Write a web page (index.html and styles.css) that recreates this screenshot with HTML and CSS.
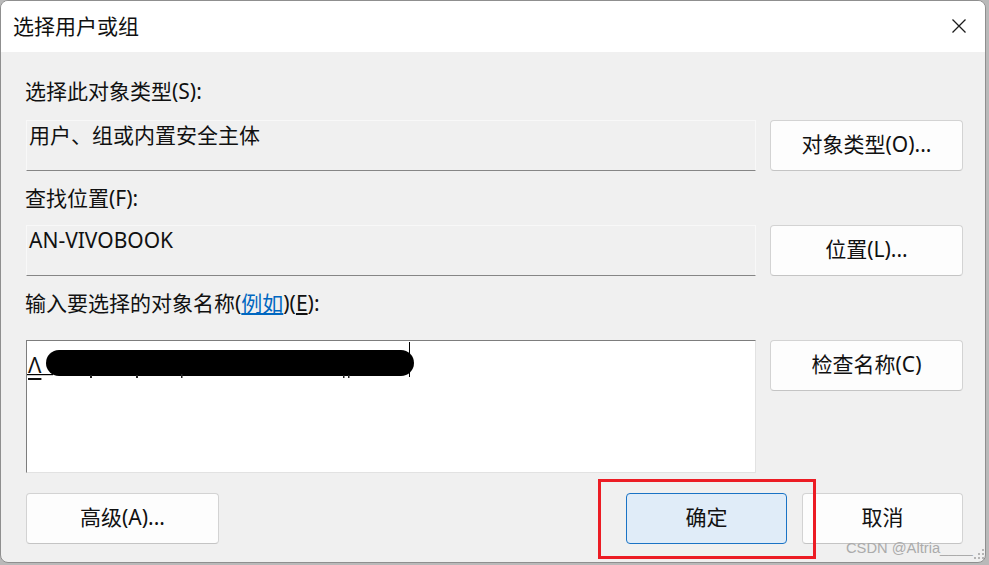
FILE: index.html
```html
<!DOCTYPE html>
<html lang="zh-CN">
<head>
<meta charset="utf-8">
<title>选择用户或组</title>
<link rel="stylesheet" href="styles.css">
</head>
<body>
<div class="window">
  <div class="titlebar">
    <span class="title">选择用户或组</span>
    <svg class="close" width="14" height="14" viewBox="0 0 14 14" aria-label="关闭">
      <path d="M0.5 0.5 L13.5 13.5 M13.5 0.5 L0.5 13.5" stroke="#1b1b1b" stroke-width="1.3" fill="none"/>
    </svg>
  </div>
  <div class="content">
    <div class="label l1">选择此对象类型(S):</div>
    <div class="row r1">
      <div class="field">用户、组或内置安全主体</div>
      <button class="btn">对象类型(O)...</button>
    </div>
    <div class="label l2">查找位置(F):</div>
    <div class="row r2">
      <div class="field">AN-VIVOBOOK</div>
      <button class="btn">位置(L)...</button>
    </div>
    <div class="label l3">输入要选择的对象名称(<a class="link">例如</a>)(<u>E</u>):</div>
    <div class="row r3">
      <div class="names">
        <span class="name">Λ</span>
        <svg class="redact" width="730" height="50" viewBox="0 0 730 50">
          <rect x="20" y="10" width="368" height="26" rx="13" fill="#000"/>
          <rect x="1" y="34" width="26" height="1.2" fill="#000"/>
          <rect x="64" y="35" width="2" height="3" fill="#222"/>
          <rect x="110" y="35" width="2" height="3" fill="#222"/>
          <rect x="155" y="34" width="1.5" height="4" fill="#222"/>
          <rect x="317" y="35" width="1.5" height="3" fill="#222"/>
          <rect x="322" y="35" width="1.5" height="3" fill="#222"/>
          <rect x="383" y="2" width="1" height="35" fill="#000"/>
        </svg>
      </div>
      <button class="btn top">检查名称(C)</button>
    </div>
    <div class="bottom">
      <button class="btn wide">高级(A)...</button>
      <div class="actions">
        <button class="btn narrow primary">确定</button>
        <button class="btn narrow">取消</button>
      </div>
    </div>
  </div>
</div>
<div class="highlight"></div>
<div class="watermark">CSDN @Altria____</div>
<svg class="grip" width="10" height="10" viewBox="0 0 10 10">
  <rect x="8" y="0" width="2" height="2" fill="#b5b5b5"/>
  <rect x="4" y="4" width="2" height="2" fill="#b5b5b5"/>
  <rect x="8" y="4" width="2" height="2" fill="#b5b5b5"/>
  <rect x="0" y="8" width="2" height="2" fill="#b5b5b5"/>
  <rect x="4" y="8" width="2" height="2" fill="#b5b5b5"/>
  <rect x="8" y="8" width="2" height="2" fill="#b5b5b5"/>
</svg>
</body>
</html>
```
FILE: styles.css
```css
* { box-sizing: border-box; }

html, body {
  margin: 0;
  width: 989px;
  height: 565px;
  overflow: hidden;
}

body {
  position: relative;
  background: #b9b9b9;
  font-family: "Noto Sans", "Noto Sans CJK SC", sans-serif;
  color: #111;
}

.window {
  width: 986px;
  height: 563px;
  border: 1px solid #8f8f8f;
  border-radius: 8px;
  overflow: hidden;
  background: #f0f0f0;
  display: flex;
  flex-direction: column;
}

.titlebar {
  height: 51px;
  background: #ffffff;
  display: flex;
  align-items: center;
  justify-content: space-between;
  padding-left: 12px;
  padding-right: 19px;
  padding-bottom: 2px;
  flex: none;
}

.title {
  font-size: 21px;
  line-height: 28px;
}

.close { display: block; margin-top: 1px; }

.content {
  padding: 26px 0 0 24px;
  display: flex;
  flex-direction: column;
}

.label {
  font-size: 21px;
  line-height: 26px;
  height: 28px;
  padding-bottom: 2px;
}

.l1 { margin-bottom: 14px; }
.l2 { margin-top: 14px; margin-bottom: 12px; }
.l3 { margin-top: 14px; margin-bottom: 22px; }

.link {
  color: #0067c0;
  text-decoration: underline;
}

.row {
  display: grid;
  grid-template-columns: 730px 193px;
  column-gap: 14px;
  margin-left: 1px;
  align-items: start;
}

.r1, .r2 { height: 51px; }

.field {
  height: 51px;
  border: 1px solid #f8f8f8;
  border-bottom-color: #868686;
  background: #f0f0f0;
  padding: 0 2px;
  font-size: 21px;
  line-height: 28px;
}

.btn {
  height: 51px;
  background: #fdfdfd;
  border: 1px solid #d3d3d3;
  border-bottom-color: #c4c4c4;
  border-radius: 4px;
  font-family: inherit;
  font-size: 21px;
  line-height: 28px;
  color: #111;
  padding: 0 0 4px;
  margin: 0;
}

.names {
  position: relative;
  height: 133px;
  background: #ffffff;
  border-top: 1px solid #7d7d7d;
  border-left: 1px solid #7d7d7d;
  border-right: 1px solid #e2e2e2;
  border-bottom: 1px solid #e2e2e2;
  padding: 9px 1px 0;
  font-size: 22px;
  line-height: 28px;
}

.name {
  text-decoration: underline;
  text-underline-offset: 5px;
}

.redact {
  position: absolute;
  left: -1px;
  top: -1px;
}

.bottom {
  margin-top: 20px;
  margin-left: 1px;
  width: 937px;
  display: flex;
  justify-content: space-between;
}

.wide { width: 193px; }

.actions {
  display: flex;
  gap: 15px;
}

.narrow { width: 161px; }

.primary {
  background: #e0ecf8;
  border: 1px solid #1a73c5;
}

.highlight {
  position: absolute;
  left: 598px;
  top: 479px;
  width: 218px;
  height: 80px;
  border: 3px solid #ec1c24;
}

.watermark {
  position: absolute;
  left: 846px;
  top: 539px;
  font-family: "Liberation Sans", sans-serif;
  font-size: 14.7px;
  line-height: 18px;
  color: #ababab;
}

.grip {
  position: absolute;
  left: 974px;
  top: 549px;
}
```
